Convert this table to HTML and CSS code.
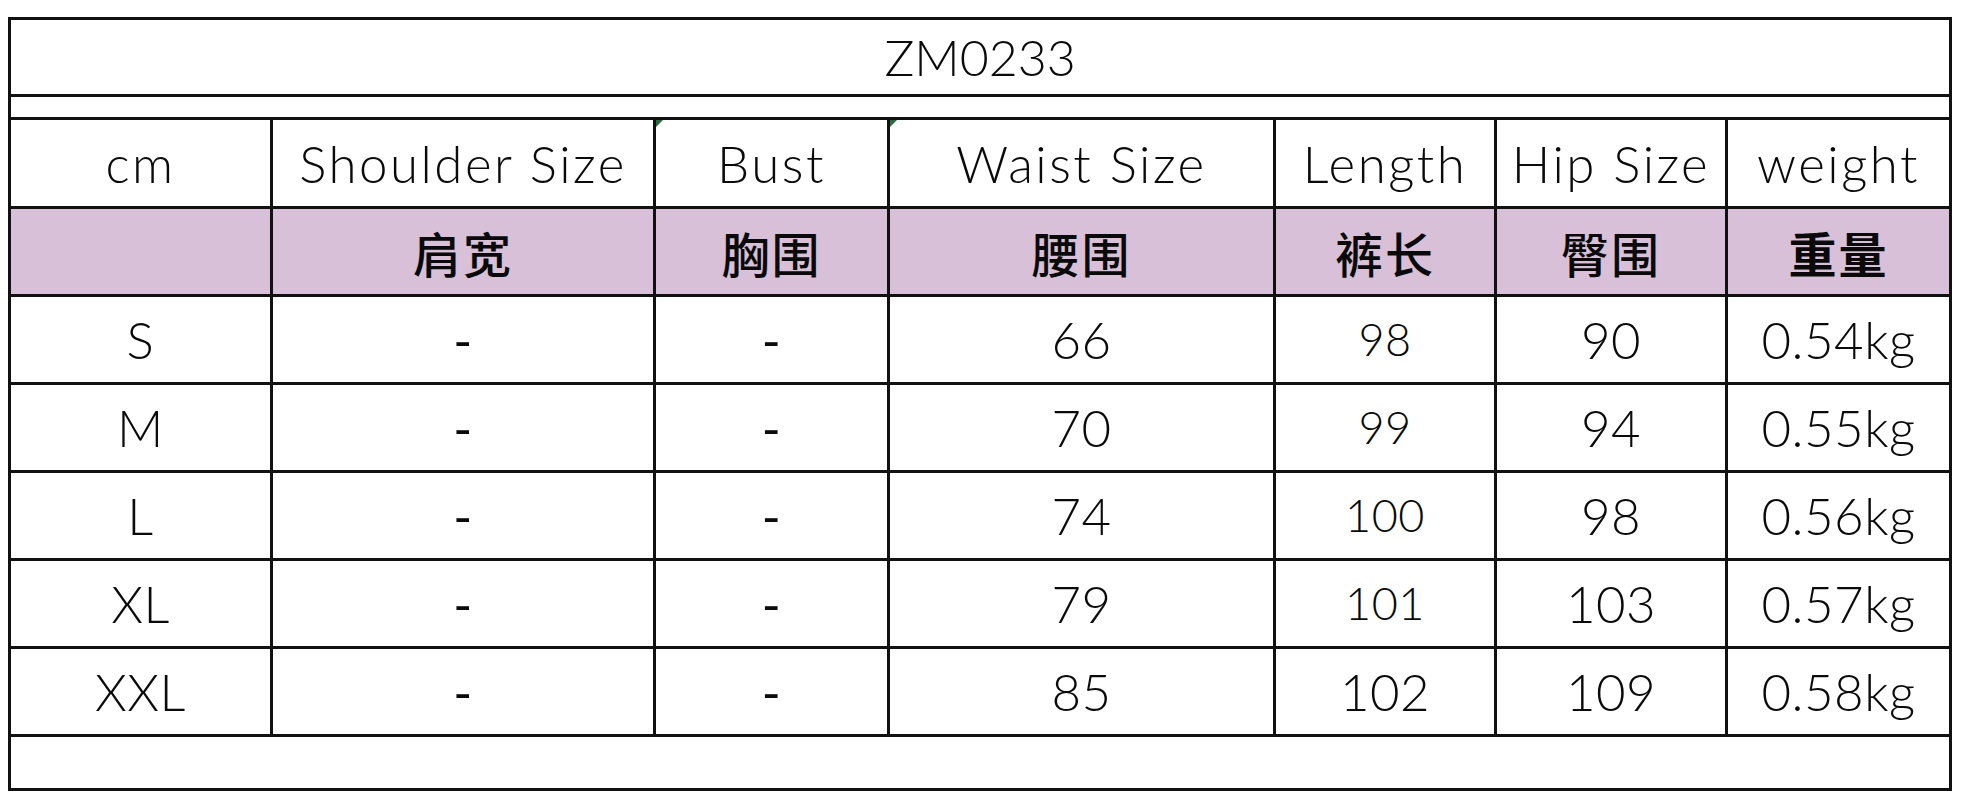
FILE: index.html
```html
<!DOCTYPE html>
<html lang="zh-CN">
<head>
<meta charset="utf-8">
<title>ZM0233</title>
<link rel="stylesheet" href="styles.css">
</head>
<body>
<div class="page">
  <table class="size-table">
    <colgroup>
      <col class="c1"><col class="c2"><col class="c3"><col class="c4"><col class="c5"><col class="c6"><col class="c7">
    </colgroup>
    <tbody>
      <tr class="row-title"><td colspan="7" class="title">ZM0233</td></tr>
      <tr class="row-gap"><td colspan="7"></td></tr>
      <tr class="row-head">
        <td>cm</td>
        <td>Shoulder Size</td>
        <td class="marked"><span class="tri"></span>Bust</td>
        <td class="marked"><span class="tri"></span>Waist Size</td>
        <td>Length</td>
        <td>Hip Size</td>
        <td>weight</td>
      </tr>
      <tr class="row-cn">
        <td></td>
        <td>肩宽</td>
        <td>胸围</td>
        <td>腰围</td>
        <td>裤长</td>
        <td>臀围</td>
        <td class="strong">重量</td>
      </tr>
      <tr class="row-data"><td>S</td><td class="dash">-</td><td class="dash">-</td><td>66</td><td class="small">98</td><td>90</td><td>0.54kg</td></tr>
      <tr class="row-data"><td>M</td><td class="dash">-</td><td class="dash">-</td><td>70</td><td class="small">99</td><td>94</td><td>0.55kg</td></tr>
      <tr class="row-data"><td>L</td><td class="dash">-</td><td class="dash">-</td><td>74</td><td class="small">100</td><td>98</td><td>0.56kg</td></tr>
      <tr class="row-data"><td>XL</td><td class="dash">-</td><td class="dash">-</td><td>79</td><td class="small">101</td><td>103</td><td>0.57kg</td></tr>
      <tr class="row-data"><td>XXL</td><td class="dash">-</td><td class="dash">-</td><td>85</td><td>102</td><td>109</td><td>0.58kg</td></tr>
      <tr class="row-foot"><td colspan="7"></td></tr>
    </tbody>
  </table>
</div>
</body>
</html>
```

FILE: styles.css
```css
html, body {
  margin: 0;
  padding: 0;
  background: #ffffff;
}

.page {
  padding: 17px 0 0 8px;
}

.size-table {
  border-collapse: collapse;
  table-layout: fixed;
  width: 1944px;
  font-family: "Lato", "Noto Sans CJK SC", sans-serif;
  font-weight: 300;
  font-size: 51px;
  color: #0a0a0a;
}

.c1 { width: 262px; }
.c2 { width: 383px; }
.c3 { width: 234px; }
.c4 { width: 386px; }
.c5 { width: 221px; }
.c6 { width: 231px; }
.c7 { width: 224px; }

.size-table td {
  border: 3px solid #111111;
  padding: 0;
  text-align: center;
  vertical-align: middle;
  line-height: 1;
  white-space: nowrap;
  overflow: hidden;
}

.row-title { height: 77px; }
.row-gap { height: 23px; }
.row-head { height: 89px; }
.row-cn { height: 88px; }
.row-data { height: 88px; }
.row-foot { height: 54px; }

.title {
  font-size: 50px;
}

.row-head td {
  letter-spacing: 2.5px;
}

.row-cn td {
  background: #d7c0d8;
  font-family: "Noto Sans CJK SC", sans-serif;
  font-weight: 500;
  font-size: 48px;
  letter-spacing: 2px;
}

.row-cn td.strong {
  font-weight: 700;
}

.row-data td {
  letter-spacing: 0.5px;
}

.row-data td.dash {
  font-weight: 400;
}

.row-data td.small {
  font-size: 45px;
}

.marked {
  position: relative;
}

.tri {
  position: absolute;
  left: 0;
  top: 0;
  width: 0;
  height: 0;
  border-top: 7px solid #2e6b3a;
  border-right: 7px solid transparent;
}
```
